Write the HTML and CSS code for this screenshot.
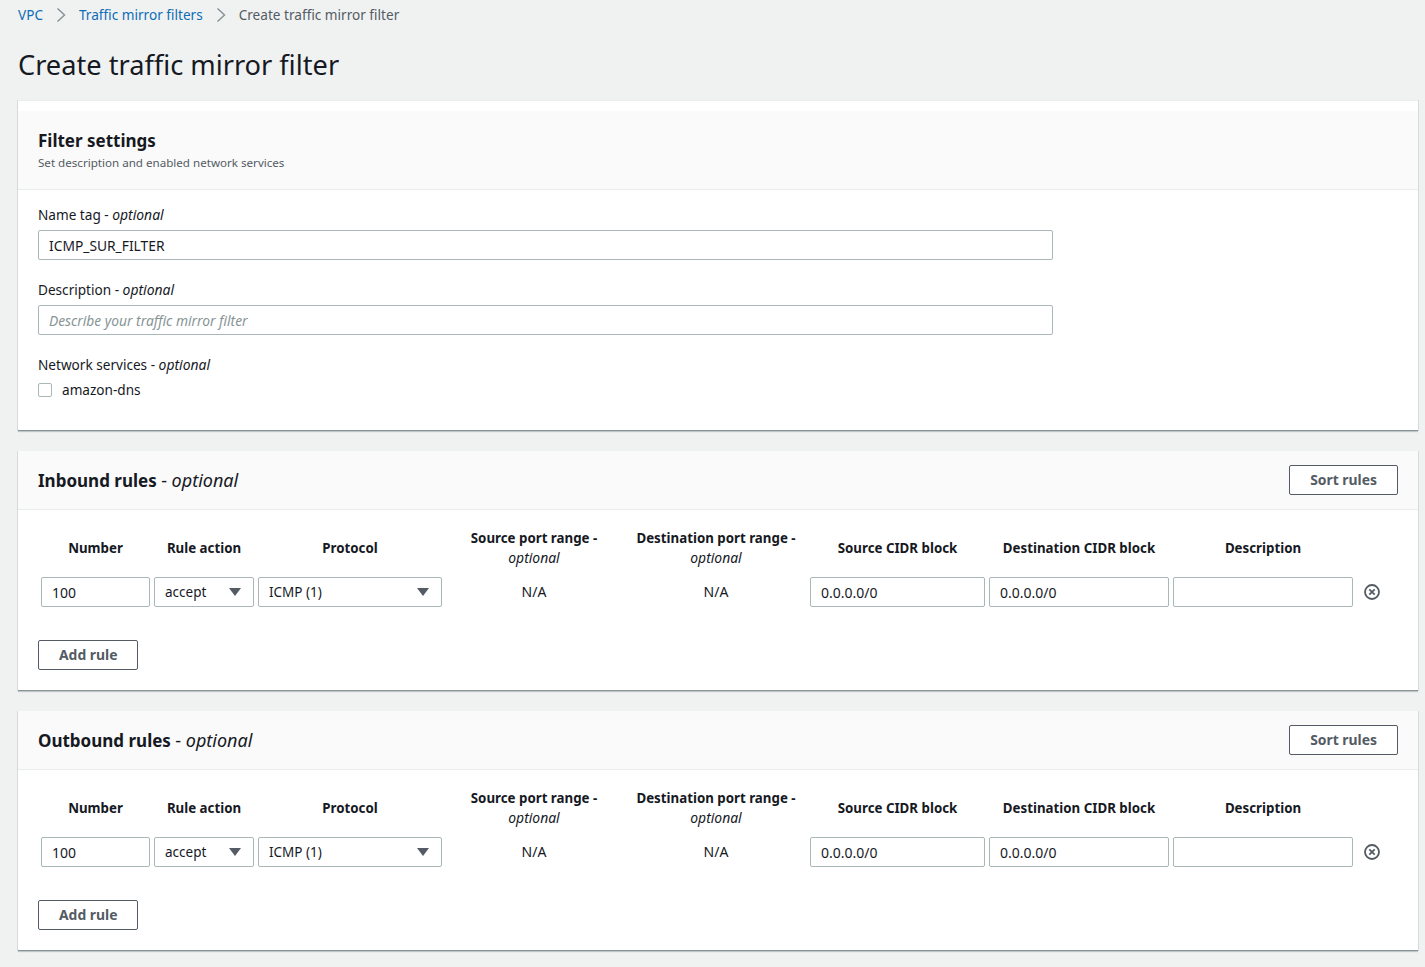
FILE: index.html
```html
<!DOCTYPE html>
<html lang="en">
<head>
  <meta charset="UTF-8">
  <title>Create traffic mirror filter</title>
  <link rel="stylesheet" href="styles.css">
</head>
<body>
  <nav class="breadcrumbs">
    <a href="#">VPC</a>
    <svg class="crumb-sep" viewBox="0 0 10 16"><path d="M1.5 1.5 L8.5 8 L1.5 14.5"/></svg>
    <a href="#">Traffic mirror filters</a>
    <svg class="crumb-sep" viewBox="0 0 10 16"><path d="M1.5 1.5 L8.5 8 L1.5 14.5"/></svg>
    <span class="crumb-current">Create traffic mirror filter</span>
  </nav>

  <h1 class="page-title">Create traffic mirror filter</h1>

  <section class="card card-settings">
    <div class="card-header settings-header">
      <div>
        <h2>Filter settings</h2>
        <p class="card-sub">Set description and enabled network services</p>
      </div>
    </div>
    <div class="settings-body">
      <label class="field-label">Name tag - <i>optional</i></label>
      <input class="text-input wide" type="text" value="ICMP_SUR_FILTER">
      <label class="field-label">Description - <i>optional</i></label>
      <input class="text-input wide" type="text" placeholder="Describe your traffic mirror filter">
      <label class="field-label">Network services - <i>optional</i></label>
      <div class="check-row">
        <span class="checkbox"></span>
        <span>amazon-dns</span>
      </div>
    </div>
  </section>

  <section class="card">
    <div class="card-header">
      <h2>Inbound rules <span class="opt">- <i>optional</i></span></h2>
      <button class="btn">Sort rules</button>
    </div>
    <div class="rules-body">
      <div class="rules-grid">
        <div class="col-head">Number</div>
        <div class="col-head">Rule action</div>
        <div class="col-head">Protocol</div>
        <div class="col-head">Source port range -<br><i>optional</i></div>
        <div class="col-head">Destination port range -<br><i>optional</i></div>
        <div class="col-head">Source CIDR block</div>
        <div class="col-head">Destination CIDR block</div>
        <div class="col-head">Description</div>
        <div></div>

        <input class="text-input" type="text" value="100">
        <div class="select">accept<span class="caret"></span></div>
        <div class="select">ICMP (1)<span class="caret"></span></div>
        <div class="cell-na">N/A</div>
        <div class="cell-na">N/A</div>
        <input class="text-input" type="text" value="0.0.0.0/0">
        <input class="text-input" type="text" value="0.0.0.0/0">
        <input class="text-input" type="text">
        <svg class="remove-icon" viewBox="0 0 16 16"><circle cx="8" cy="8" r="7"/><path d="M5.3 5.3 L10.7 10.7 M10.7 5.3 L5.3 10.7"/></svg>
      </div>
      <button class="btn">Add rule</button>
    </div>
  </section>

  <section class="card">
    <div class="card-header">
      <h2>Outbound rules <span class="opt">- <i>optional</i></span></h2>
      <button class="btn">Sort rules</button>
    </div>
    <div class="rules-body">
      <div class="rules-grid">
        <div class="col-head">Number</div>
        <div class="col-head">Rule action</div>
        <div class="col-head">Protocol</div>
        <div class="col-head">Source port range -<br><i>optional</i></div>
        <div class="col-head">Destination port range -<br><i>optional</i></div>
        <div class="col-head">Source CIDR block</div>
        <div class="col-head">Destination CIDR block</div>
        <div class="col-head">Description</div>
        <div></div>

        <input class="text-input" type="text" value="100">
        <div class="select">accept<span class="caret"></span></div>
        <div class="select">ICMP (1)<span class="caret"></span></div>
        <div class="cell-na">N/A</div>
        <div class="cell-na">N/A</div>
        <input class="text-input" type="text" value="0.0.0.0/0">
        <input class="text-input" type="text" value="0.0.0.0/0">
        <input class="text-input" type="text">
        <svg class="remove-icon" viewBox="0 0 16 16"><circle cx="8" cy="8" r="7"/><path d="M5.3 5.3 L10.7 10.7 M10.7 5.3 L5.3 10.7"/></svg>
      </div>
      <button class="btn">Add rule</button>
    </div>
  </section>
</body>
</html>
```

FILE: styles.css
```css
* {
  box-sizing: border-box;
}

body {
  font-family: "Noto Sans", "Liberation Sans", sans-serif;
  font-size: 13.6px;
  line-height: 20px;
  margin: 0;
  padding: 0 7px 17px 18px;
  background-color: #f0f2f2;
  color: #16191f;
}

i {
  font-size: 13.9px;
}

.breadcrumbs {
  display: flex;
  align-items: center;
  height: 30px;
}
.breadcrumbs a {
  color: #0f6cb6;
  text-decoration: none;
}
.crumb-sep {
  width: 10px;
  height: 16px;
  margin: 0 13px;
  fill: none;
  stroke: #879596;
  stroke-width: 1.5;
}
.crumb-current {
  color: #545b64;
}

.page-title {
  font-size: 27.2px;
  font-weight: 400;
  line-height: 40px;
  margin: 15px 0 15px;
}

.card {
  background-color: white;
  margin-bottom: 20px;
  border-bottom: 1px solid #879596;
  box-shadow: 1px 0 0 #d5dbdb, -1px 0 0 #d5dbdb, 0 1px 1px rgba(0, 27, 36, 0.2);
}
.card-settings {
  border-top: 1px solid #eaeded;
  padding-top: 10px;
}

.card-header {
  display: flex;
  justify-content: space-between;
  align-items: center;
  height: 59px;
  padding: 0 20px;
  background-color: #fafafa;
  border-bottom: 1px solid #eaeded;
}
.settings-header {
  height: 79px;
}
.card-header h2 {
  font-size: 17px;
  font-weight: 700;
  line-height: 24px;
  margin: 0;
}
.card-header .opt {
  font-weight: 400;
}
.card-header .opt, .card-header .opt i {
  font-size: 18px;
}
.card-sub {
  font-size: 11.6px;
  line-height: 16px;
  margin: 2px 0 0;
  color: #545b64;
}

.settings-body {
  padding: 15px 20px 30px;
}
.field-label {
  display: block;
  margin-bottom: 5px;
}
.text-input {
  height: 30px;
  width: 100%;
  padding: 0 10px;
  font-family: inherit;
  font-size: 14px;
  color: #16191f;
  background-color: white;
  border: 1px solid #aab7b8;
  border-radius: 2px;
  outline: none;
}
.text-input::placeholder {
  color: #879596;
  font-style: italic;
}
.wide {
  display: block;
  width: 1015px;
  margin-bottom: 20px;
  font-size: 13.8px;
}

.check-row {
  display: flex;
  align-items: center;
  gap: 10px;
}
.checkbox {
  width: 14px;
  height: 14px;
  border: 1px solid #aab7b8;
  border-radius: 2px;
}

.rules-body {
  padding: 18px 20px 20px;
}
.rules-grid {
  display: grid;
  grid-template-columns: 109px 100px 184px 176px 180px 175px 180px 180px 30px;
  grid-template-rows: 40px 30px;
  gap: 9px 4px;
  margin: 0 0 33px 3px;
  align-items: center;
}
.col-head {
  font-size: 13.3px;
  font-weight: 700;
  text-align: center;
}
.col-head i {
  font-weight: 400;
}
.cell-na {
  font-size: 14px;
  text-align: center;
}

.select {
  display: flex;
  justify-content: space-between;
  align-items: center;
  height: 30px;
  padding: 0 12px 0 10px;
  font-size: 13.5px;
  background-color: white;
  border: 1px solid #aab7b8;
  border-radius: 2px;
}
.caret {
  width: 0;
  height: 0;
  border-left: 6px solid transparent;
  border-right: 6px solid transparent;
  border-top: 8px solid #545b64;
}

.remove-icon {
  width: 16px;
  height: 16px;
  margin-left: 7px;
  fill: none;
  stroke: #545b64;
  stroke-width: 1.8;
}

.btn {
  display: block;
  height: 30px;
  padding: 0 20px 2px;
  font-family: inherit;
  font-size: 13.9px;
  font-weight: 700;
  color: #545b64;
  background-color: white;
  border: 1px solid #545b64;
  border-radius: 2px;
}
```
